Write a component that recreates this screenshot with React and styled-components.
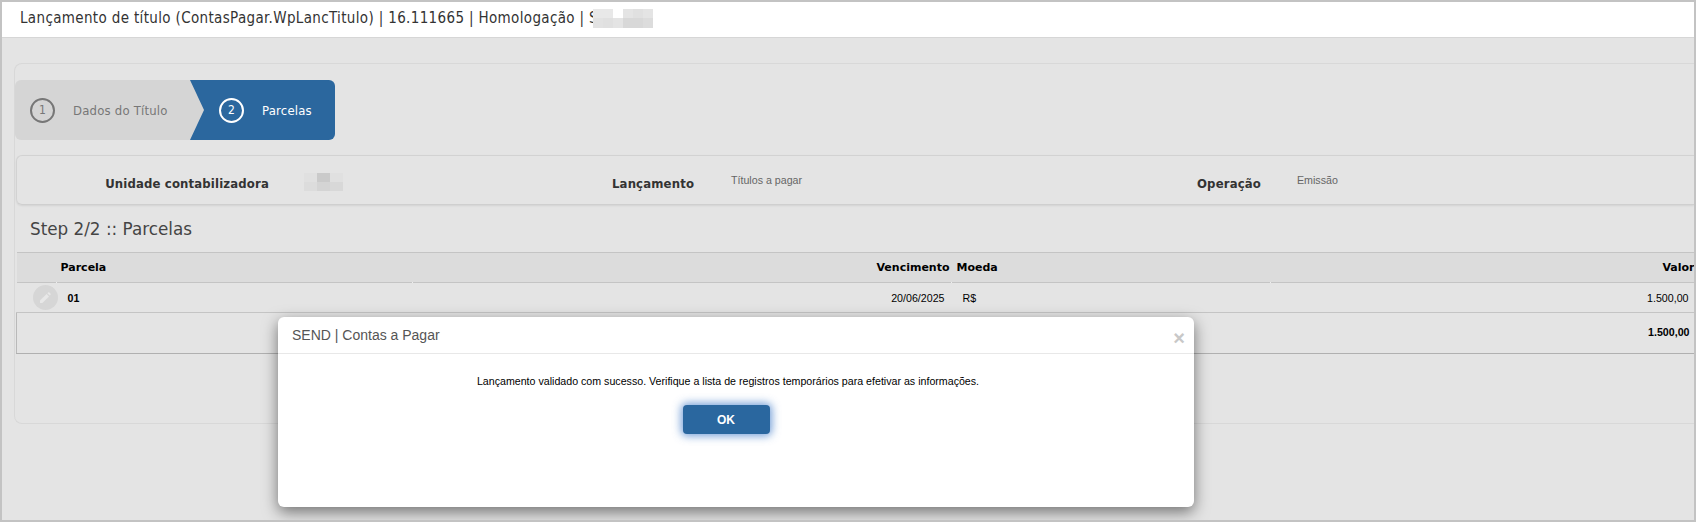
import React from 'react';
import styled, { createGlobalStyle } from 'styled-components';

const GlobalStyle = createGlobalStyle`
  html, body {
    margin: 0;
    padding: 0;
    background: #e4e4e4;
  }
`;

const tahoma = `"DejaVu Sans Condensed", "DejaVu Sans", sans-serif`;
const arial = `"Liberation Sans", Arial, sans-serif`;

const Page = styled.div`
  position: relative;
  box-sizing: border-box;
  width: 1696px;
  height: 522px;
  overflow: hidden;
  background: #e4e4e4;
  border: solid #c3c3c3;
  border-width: 2px;
`;

const TopBar = styled.header`
  display: flex;
  align-items: center;
  height: 36px;
  padding: 0 0 3px 18px;
  box-sizing: border-box;
  background: #fff;
  border-bottom: 1px solid #d6d6d6;
  font-family: ${tahoma};
  font-size: 15px;
  letter-spacing: 0.35px;
  color: #333;
  white-space: nowrap;
`;

const Censor = styled.span`
  display: inline-grid;
  grid-template-columns: repeat(${(p) => p.$cols}, ${(p) => p.$size}px);
  grid-auto-rows: ${(p) => p.$rowSize}px;
  margin-left: ${(p) => p.$overlap || 0}px;
`;

const CensorCell = styled.i`
  display: block;
  background: ${(p) => p.$shade};
`;

const Content = styled.main`
  padding: 25px 0 0 12px;
`;

const Panel = styled.section`
  box-sizing: border-box;
  height: 361px;
  padding: 16px 0 0 0;
  border: 1px solid #d8d8d8;
  border-right: 0;
  border-radius: 8px 0 0 8px;
`;

const Stepper = styled.ol`
  display: flex;
  height: 60px;
  margin: 0;
  padding: 0;
  list-style: none;
  font-family: ${tahoma};
  font-size: 13px;
  letter-spacing: 0.2px;
`;

const Step = styled.li`
  display: flex;
  align-items: center;
  box-sizing: border-box;
  height: 60px;
  width: ${(p) => (p.$active ? '145px' : '189px')};
  margin-left: ${(p) => (p.$active ? '-14px' : '0')};
  padding-left: ${(p) => (p.$active ? '29px' : '15px')};
  background: ${(p) => (p.$active ? '#2b679e' : '#d5d5d5')};
  color: ${(p) => (p.$active ? '#fff' : '#777')};
  border-radius: ${(p) => (p.$active ? '0 6px 6px 0' : '6px 0 0 6px')};
  clip-path: ${(p) => (p.$active ? 'none' : 'polygon(0 0, 175px 0, 189px 50%, 175px 100%, 0 100%)')};
  z-index: ${(p) => (p.$active ? 0 : 1)};
`;

const StepNumber = styled.span`
  display: flex;
  align-items: center;
  justify-content: center;
  box-sizing: border-box;
  width: 25px;
  height: 25px;
  margin-right: 18px;
  border: 2px solid currentColor;
  border-radius: 50%;
  font-size: 12px;
`;

const InfoBox = styled.div`
  display: grid;
  grid-template-columns: 252px 343px 82px 503px 64px 1fr;
  align-items: start;
  box-sizing: border-box;
  height: 50px;
  margin: 15px 0 0 1px;
  border: 1px solid #d2d2d2;
  border-bottom-color: #cfcfcf;
  border-right: 0;
  border-radius: 6px 0 0 6px;
  box-shadow: 0 1px 2px rgba(0, 0, 0, 0.08);
  font-family: ${tahoma};
`;

const InfoLabel = styled.div`
  padding-top: 20px;
  text-align: right;
  white-space: nowrap;
  font-size: 13px;
  font-weight: 700;
  letter-spacing: 0.15px;
  color: #333;
`;

const InfoValue = styled.div`
  padding: ${(p) => p.$top ?? 18}px 0 0 ${(p) => p.$left}px;
  font-family: ${arial};
  font-size: 10.67px;
  color: #666;
`;

const StepTitle = styled.h2`
  height: 47px;
  margin: 0;
  padding: 14px 0 0 15px;
  box-sizing: border-box;
  font-family: "DejaVu Sans", sans-serif;
  font-size: 16.8px;
  font-weight: 400;
  color: #444;
`;

const Table = styled.table`
  width: 1678px;
  margin-left: 1px;
  border-collapse: collapse;
  table-layout: fixed;
  font-family: ${arial};
  font-size: 10.67px;
  color: #000;
`;

const HeadCell = styled.th`
  position: relative;
  height: 30px;
  padding: 0;
  box-sizing: border-box;
  background: #dcdcdc;
  border-top: 1px solid #c4c4c4;
  border-bottom: 1px solid #c4c4c4;
  font-family: "DejaVu Sans", sans-serif;
  font-size: 11px;
  font-weight: 700;
  text-align: ${(p) => p.$align || 'left'};
  padding-left: ${(p) => p.$left || 0}px;
  padding-right: ${(p) => p.$right || 0}px;

  &:not(:first-child)::after {
    content: '';
    position: absolute;
    left: 0;
    bottom: -1px;
    width: 1px;
    height: 1px;
    background: #eee;
  }
`;

const Cell = styled.td`
  height: 30px;
  padding: 0;
  box-sizing: border-box;
  border-bottom: 1px solid #c4c4c4;
  text-align: ${(p) => p.$align || 'left'};
  padding-left: ${(p) => p.$left || 0}px;
  padding-right: ${(p) => p.$right || 0}px;
  font-weight: ${(p) => (p.$bold ? 700 : 400)};
`;

const TotalRow = styled.td`
  height: 41px;
  padding: 13px 5px 0 0;
  box-sizing: border-box;
  vertical-align: top;
  text-align: right;
  font-weight: 700;
  border-left: 1px solid #b9b9b9;
  border-bottom: 1px solid #b0b0b0;
`;

const EditButton = styled.span`
  display: flex;
  align-items: center;
  justify-content: center;
  width: 25px;
  height: 25px;
  margin-left: 16px;
  border-radius: 50%;
  background: #d6d6d6;
`;

const Modal = styled.div`
  position: absolute;
  left: 276px;
  top: 315px;
  width: 916px;
  height: 190px;
  background: #fff;
  border-radius: 6px;
  box-shadow: 0 5px 15px rgba(0, 0, 0, 0.5);
`;

const ModalHeader = styled.div`
  display: flex;
  align-items: center;
  justify-content: space-between;
  box-sizing: border-box;
  height: 37px;
  padding: 0 9px 0 14px;
  border-bottom: 1px solid #e8e8e8;
  font-family: ${arial};
  font-size: 14px;
  color: #555;
`;

const CloseMark = styled.span`
  margin-top: 5px;
  font-family: ${arial};
  font-size: 20px;
  font-weight: 700;
  line-height: 1;
  color: #c8c8c8;
`;

const ModalBody = styled.div`
  display: flex;
  flex-direction: column;
  align-items: center;
  padding: 21px 16px 0 0;
  font-family: ${arial};
  font-size: 10.65px;
  color: #000;
`;

const OkButton = styled.button`
  width: 87px;
  height: 29px;
  margin: 18px 4px 0 0;
  padding: 0;
  border: 0;
  border-radius: 4px;
  background: #2a679f;
  box-shadow: 0 0 8px 2px rgba(60, 120, 200, 0.7);
  font-family: ${arial};
  font-size: 12px;
  font-weight: 700;
  color: #fff;
`;

const Blur = ({ cols, size, rowSize, overlap, shades }) => (
  <Censor $cols={cols} $size={size} $rowSize={rowSize} $overlap={overlap}>
    {shades.map((shade, i) => (
      <CensorCell key={i} $shade={shade} />
    ))}
  </Censor>
);

const PencilIcon = () => (
  <svg width="14" height="14" viewBox="0 0 14 14" aria-hidden="true">
    <path d="M2 9.6 8.6 3 11 5.4 4.4 12H2z" fill="#e8e8e8" />
    <path d="M9.4 2.2 10 1.6a1 1 0 0 1 1.4 0l1 1a1 1 0 0 1 0 1.4l-.6.6z" fill="#e8e8e8" />
  </svg>
);

const App = () => (
  <Page>
    <GlobalStyle />
    <TopBar>
      Lançamento de título (ContasPagar.WpLancTitulo) | 16.111665 | Homologação | S
      <Blur
        cols={6}
        size={10}
        rowSize={9.5}
        overlap={-5}
        shades={[
          '#e8e8e8', '#e8e8e8', '#ffffff', '#e4e4e4', '#e0e0e0', '#e4e4e4',
          '#e2e2e2', '#e0e0e0', '#e4e4e4', '#d8d8d8', '#d8d8d8', '#dcdcdc',
        ]}
      />
    </TopBar>
    <Content>
      <Panel>
        <Stepper>
          <Step>
            <StepNumber>1</StepNumber>
            Dados do Título
          </Step>
          <Step $active>
            <StepNumber>2</StepNumber>
            Parcelas
          </Step>
        </Stepper>
        <InfoBox>
          <InfoLabel>Unidade contabilizadora</InfoLabel>
          <InfoValue $left={35} $top={16}>
            <Blur
              cols={3}
              size={13}
              rowSize={9}
              shades={['#e0e0e0', '#cacaca', '#e0e0e0', '#dcdcdc', '#d4d4d4', '#d8d8d8']}
            />
          </InfoValue>
          <InfoLabel>Lançamento</InfoLabel>
          <InfoValue $left={37}>Títulos a pagar</InfoValue>
          <InfoLabel>Operação</InfoLabel>
          <InfoValue $left={36}>Emissão</InfoValue>
        </InfoBox>
        <StepTitle>Step 2/2 :: Parcelas</StepTitle>
        <Table>
          <colgroup>
            <col width="39" />
            <col width="356" />
            <col width="539" />
            <col width="319" />
            <col width="425" />
          </colgroup>
          <thead>
            <tr>
              <HeadCell />
              <HeadCell $left={5}>Parcela</HeadCell>
              <HeadCell $align="right" $right={1}>Vencimento</HeadCell>
              <HeadCell $left={6}>Moeda</HeadCell>
              <HeadCell $align="right">Valor</HeadCell>
            </tr>
          </thead>
          <tbody>
            <tr>
              <Cell><EditButton><PencilIcon /></EditButton></Cell>
              <Cell $left={12} $bold>01</Cell>
              <Cell $align="right" $right={6}>20/06/2025</Cell>
              <Cell $left={12}>R$</Cell>
              <Cell $align="right" $right={6}>1.500,00</Cell>
            </tr>
            <tr>
              <TotalRow colSpan={5}>1.500,00</TotalRow>
            </tr>
          </tbody>
        </Table>
      </Panel>
    </Content>
    <Modal>
      <ModalHeader>
        SEND | Contas a Pagar
        <CloseMark>×</CloseMark>
      </ModalHeader>
      <ModalBody>
        Lançamento validado com sucesso. Verifique a lista de registros temporários para efetivar as informações.
        <OkButton>OK</OkButton>
      </ModalBody>
    </Modal>
  </Page>
);

export default App;
